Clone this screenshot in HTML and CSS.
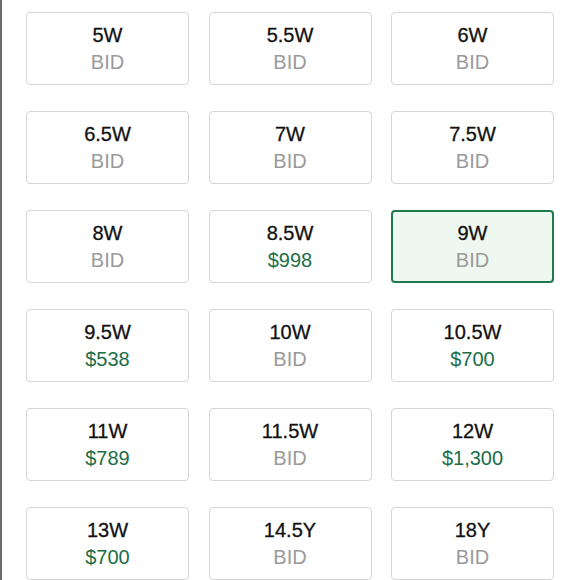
FILE: index.html
```html
<!DOCTYPE html>
<html lang="en">
<head>
    <meta charset="UTF-8">
    <title>Select Size</title>
    <link rel="stylesheet" href="styles.css">
</head>
<body>
    <div class="sizes">
        <div class="size"><span class="label">5W</span><span class="bid">BID</span></div>
        <div class="size"><span class="label">5.5W</span><span class="bid">BID</span></div>
        <div class="size"><span class="label">6W</span><span class="bid">BID</span></div>

        <div class="size"><span class="label">6.5W</span><span class="bid">BID</span></div>
        <div class="size"><span class="label">7W</span><span class="bid">BID</span></div>
        <div class="size"><span class="label">7.5W</span><span class="bid">BID</span></div>

        <div class="size"><span class="label">8W</span><span class="bid">BID</span></div>
        <div class="size"><span class="label">8.5W</span><span class="price">$998</span></div>
        <div class="size selected"><span class="label">9W</span><span class="bid">BID</span></div>

        <div class="size"><span class="label">9.5W</span><span class="price">$538</span></div>
        <div class="size"><span class="label">10W</span><span class="bid">BID</span></div>
        <div class="size"><span class="label">10.5W</span><span class="price">$700</span></div>

        <div class="size"><span class="label">11W</span><span class="price">$789</span></div>
        <div class="size"><span class="label">11.5W</span><span class="bid">BID</span></div>
        <div class="size"><span class="label">12W</span><span class="price">$1,300</span></div>

        <div class="size"><span class="label">13W</span><span class="price">$700</span></div>
        <div class="size"><span class="label">14.5Y</span><span class="bid">BID</span></div>
        <div class="size"><span class="label">18Y</span><span class="bid">BID</span></div>
    </div>
</body>
</html>
```

FILE: styles.css
```css
html, body {
    margin: 0;
    height: 100%;
}
body {
    background: #fff;
    border-left: 2px solid #6b6b6b;
    font-family: "Liberation Sans", Arial, sans-serif;
    font-size: 20px;
    overflow: hidden;
}
.sizes {
    display: grid;
    grid-template-columns: repeat(3, 163px);
    grid-auto-rows: 73px;
    column-gap: 19.5px;
    row-gap: 26px;
    padding: 12px 0 0 24px;
}
.size {
    box-sizing: border-box;
    border: 1px solid #d6d6d6;
    border-radius: 4px;
    display: flex;
    flex-direction: column;
    align-items: center;
    justify-content: center;
    line-height: 27px;
}
.size.selected {
    border: 2px solid #1f7a4d;
    background-color: #eef7f0;
}
.label {
    color: #111;
    -webkit-text-stroke: 0.3px #111;
}
.bid {
    color: #9a9a9a;
}
.price {
    color: #1b6e48;
}
```
